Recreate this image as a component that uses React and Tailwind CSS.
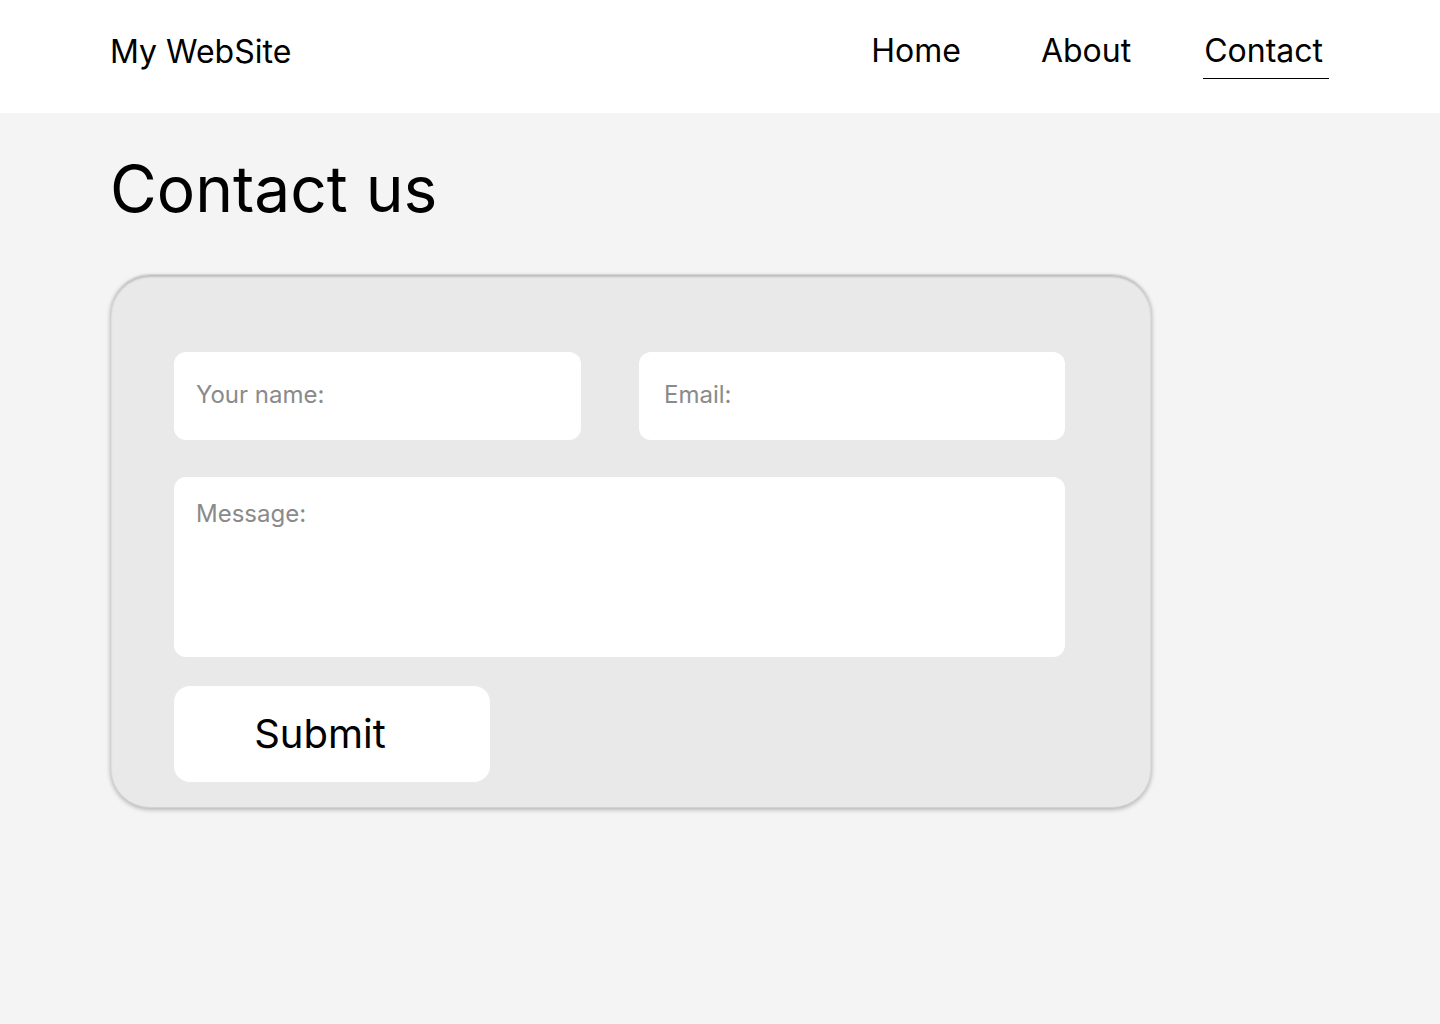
import React from "react";

function Header() {
  return (
    <header className="h-[113px] bg-white pl-[110px] pr-[111px] flex items-center justify-between">
      <div className="text-[32px] text-black leading-none pb-[10px]">My WebSite</div>
      <nav className="flex items-end text-[32px] text-black leading-none">
        <a className="pb-[11px] border-b border-transparent">Home</a>
        <a className="ml-[80px] pb-[11px] border-b border-transparent">About</a>
        <a className="ml-[72px] pb-[11px] border-b border-black pl-[1px] pr-[6px]">Contact</a>
      </nav>
    </header>
  );
}

function ContactForm() {
  return (
    <div className="w-[1042px] h-[534px] rounded-[40px] bg-[#e9e9e9] border border-[#d2d2d2] shadow-[0_2px_4px_rgba(0,0,0,0.25),inset_0_2px_2px_rgba(0,0,0,0.18)] pt-[77px] pl-[63px]">
      <div className="flex gap-[58px]">
        <div className="w-[407px] h-[88px] bg-white rounded-[12px] pl-[22px] pb-[2px] flex items-center text-[24px] text-[#8a8a8a]">
          Your name:
        </div>
        <div className="w-[426px] h-[88px] bg-white rounded-[12px] pl-[25px] pb-[2px] flex items-center text-[24px] text-[#8a8a8a]">
          Email:
        </div>
      </div>
      <div className="mt-[37px] w-[891px] h-[180px] bg-white rounded-[12px] pl-[22px] pt-[25px] text-[24px] text-[#8a8a8a] leading-none">
        Message:
      </div>
      <button className="mt-[29px] w-[316px] h-[96px] bg-white rounded-[16px] text-[40px] text-black pr-[24px]">
        Submit
      </button>
    </div>
  );
}

export default function App() {
  return (
    <div className="min-h-[1024px] bg-[#f4f4f4]" style={{ fontFamily: "Inter, 'Noto Sans', sans-serif" }}>
      <Header />
      <main className="px-[110px]">
        <h1 className="text-[64px] leading-none text-black pt-[44px] pb-[53px]">Contact us</h1>
        <ContactForm />
      </main>
    </div>
  );
}
